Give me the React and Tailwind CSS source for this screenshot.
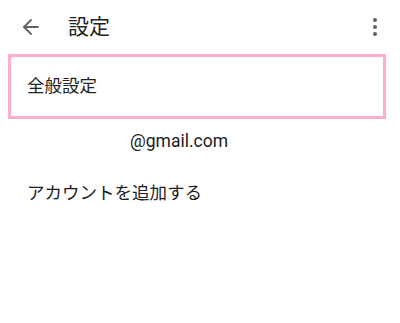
import { ArrowLeft } from 'lucide-react'

export default function App() {
  return (
    <div className="w-[400px] h-[323px] bg-white text-[#212121] font-['Roboto','Noto_Sans_CJK_JP',sans-serif]">
      {/* Toolbar */}
      <div className="h-[54px] flex items-center pl-[19px] pr-[16px]">
        <ArrowLeft className="w-[24px] h-[24px] text-[#5f6368]" strokeWidth={1.8} />
        <h1 className="ml-[25px] text-[21px] leading-none flex-1">設定</h1>
        <div className="flex flex-col gap-[3px] items-center mr-[7px]">
          <span className="w-[4px] h-[4px] rounded-full bg-[#5f6368]" />
          <span className="w-[4px] h-[4px] rounded-full bg-[#5f6368]" />
          <span className="w-[4px] h-[4px] rounded-full bg-[#5f6368]" />
        </div>
      </div>

      {/* General settings (highlighted) */}
      <div className="ml-[8px] w-[378px] h-[65px] border-[3px] border-[#ffadc9] flex items-center pl-[16px] text-[17.5px]">
        全般設定
      </div>

      <div className="h-[44px] flex items-center pl-[130px] text-[17.5px]">
        @gmail.com
      </div>

      <div className="h-[60px] flex items-center pl-[27px] text-[17.5px]">
        アカウントを追加する
      </div>
    </div>
  )
}
